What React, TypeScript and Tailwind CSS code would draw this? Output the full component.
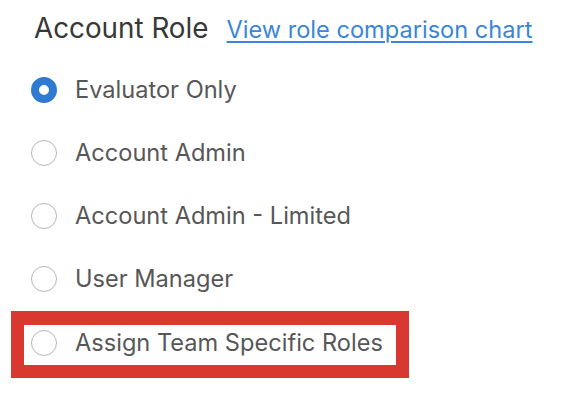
import React, { useState } from 'react';

const roles = ['Evaluator Only', 'Account Admin', 'Account Admin - Limited', 'User Manager'];

const Radio: React.FC<{ checked: boolean }> = ({ checked }) => (
  <span
    className={`shrink-0 w-[26px] h-[26px] rounded-full bg-white ${
      checked ? 'border-[8px] border-[#2f7bd1]' : 'border-[1.5px] border-[#b3b7bc]'
    }`}
  />
);

const App: React.FC = () => {
  const [role, setRole] = useState('Evaluator Only');

  return (
    <div className="w-[568px] h-[400px] bg-white font-['Inter',sans-serif] text-[23.6px]">
      {/* Header */}
      <div className="h-[58px] pl-[34px] flex items-center">
        <div className="flex items-baseline gap-[18px]">
          <span className="text-[27.8px] text-[#383838]">Account Role</span>
          <a href="#" className="text-[#3b86d6] underline underline-offset-[3px] decoration-[1.5px]">
            View role comparison chart
          </a>
        </div>
      </div>

      {/* Options */}
      <div className="flex flex-col pl-[31px]">
        {roles.map((r) => (
          <label key={r} onClick={() => setRole(r)} className="h-[63px] flex items-center gap-[18px] cursor-pointer">
            <Radio checked={role === r} />
            <span className="text-[#575757]">{r}</span>
          </label>
        ))}
        <div className="mt-[1px] -ml-[20px] w-[398px] h-[67px] border-x-[13px] border-t-[14px] border-b-[13px] border-[#d93831] pl-[7px] flex items-center">
          <label onClick={() => setRole('team')} className="flex items-center gap-[18px] -mt-[4px] cursor-pointer">
            <Radio checked={role === 'team'} />
            <span className="text-[#575757]">Assign Team Specific Roles</span>
          </label>
        </div>
      </div>
    </div>
  );
};

export default App;
